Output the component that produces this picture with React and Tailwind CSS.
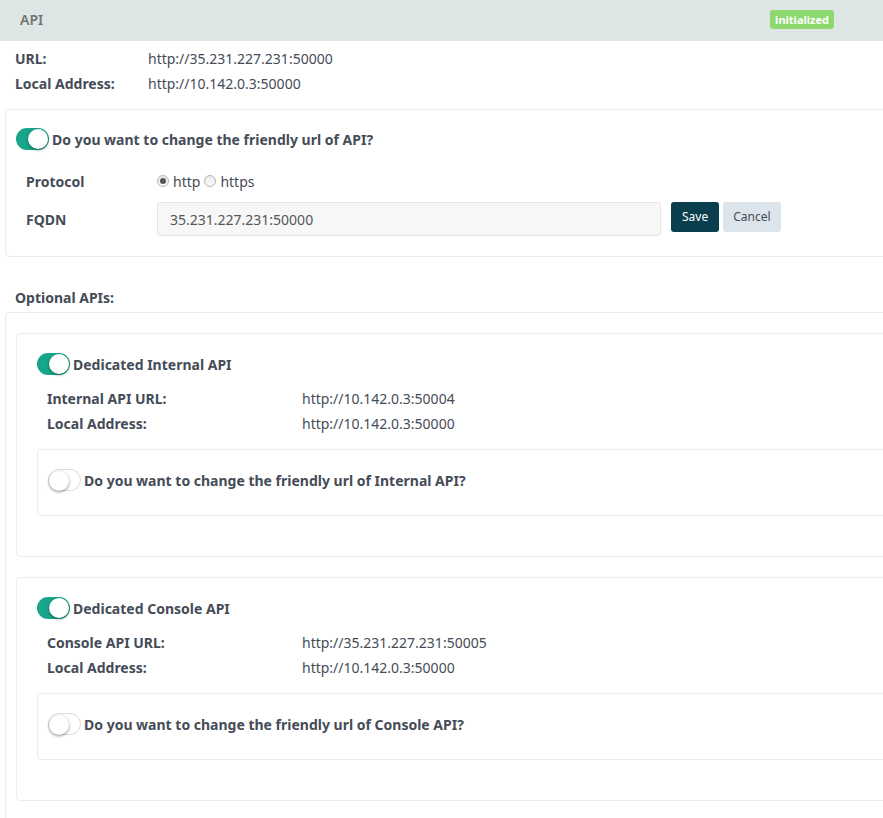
import { useState } from "react";

function Toggle({ on }) {
  return (
    <span
      className={
        "relative inline-block w-[33px] h-[22px] rounded-full shrink-0 " +
        (on ? "bg-[#17a68a]" : "bg-white border border-[#dcdcdc]")
      }
    >
      <span
        className={
          "absolute top-[1px] w-[20px] h-[20px] rounded-full bg-white shadow-[0_1px_3px_rgba(0,0,0,0.45)] " +
          (on ? "right-[1px]" : "left-0 top-0")
        }
      />
    </span>
  );
}

function Radio({ checked }) {
  return (
    <span className="inline-flex items-center justify-center w-[12px] h-[12px] rounded-full border border-[#b5b5b5] bg-gradient-to-b from-[#e9e9e9] to-[#fafafa]">
      {checked && <span className="w-[6px] h-[6px] rounded-full bg-[#555]" />}
    </span>
  );
}

function ApiCard({ title, urlLabel, url, local, friendlyName }) {
  return (
    <div className="border border-[#ececec] rounded-[4px] pt-[19px] pl-[20px] pb-[40px]">
      <div className="flex items-center gap-[3px] h-[22px]">
        <Toggle on />
        <span className="font-bold">{title}</span>
      </div>
      <div className="pl-[10px] mt-[11px]">
        <div className="flex h-[25px] items-center">
          <span className="w-[255px] font-bold">{urlLabel}</span>
          <span>{url}</span>
        </div>
        <div className="flex h-[25px] items-center">
          <span className="w-[255px] font-bold">Local Address:</span>
          <span>{local}</span>
        </div>
      </div>
      <div className="mt-[13px] border border-[#ececec] rounded-[4px] h-[67px] pl-[10px] pt-[19px]">
        <div className="flex items-center gap-[3px] h-[22px]">
          <Toggle on={false} />
          <span className="font-bold">
            Do you want to change the friendly url of {friendlyName}?
          </span>
        </div>
      </div>
    </div>
  );
}

export default function App() {
  const [fqdn, setFqdn] = useState("35.231.227.231:50000");

  return (
    <div className="w-full h-[818px] overflow-hidden bg-white font-['Noto_Sans',sans-serif] text-[14px] text-[#454c57]">
      <div className="w-[910px]">
        <div className="h-[41px] bg-[#dde6e4] flex items-center justify-between pl-[20px] pr-[76px]">
          <span className="text-[#727272] font-semibold -mt-[3px]">API</span>
          <span className="bg-[#8dd96f] text-white text-[11px] font-bold rounded-[3px] px-[5px] h-[19px] leading-[19px] -mt-[3px]">
            initialized
          </span>
        </div>

        <div className="px-[15px] pt-[5px]">
          <div className="flex h-[25px] items-center">
            <span className="w-[133px] font-bold">URL:</span>
            <span>http://35.231.227.231:50000</span>
          </div>
          <div className="flex h-[25px] items-center">
            <span className="w-[133px] font-bold">Local Address:</span>
            <span>http://10.142.0.3:50000</span>
          </div>
        </div>

        <div className="ml-[5px] mt-[13px] border border-[#ececec] rounded-[4px] h-[148px] pt-[18px] pl-[10px]">
          <div className="flex items-center gap-[3px] h-[22px]">
            <Toggle on />
            <span className="font-bold">Do you want to change the friendly url of API?</span>
          </div>
          <div className="pl-[10px] mt-[19px]">
            <div className="flex items-center h-[24px]">
              <span className="w-[131px] font-bold">Protocol</span>
              <label className="flex items-center gap-[4px]">
                <Radio checked />
                <span>http</span>
              </label>
              <label className="flex items-center gap-[4px] ml-[4px]">
                <Radio />
                <span>https</span>
              </label>
            </div>
            <div className="flex items-center mt-[9px]">
              <span className="w-[131px] font-bold">FQDN</span>
              <input
                value={fqdn}
                onChange={(e) => setFqdn(e.target.value)}
                className="w-[504px] h-[34px] bg-[#f7f7f7] border border-[#e6e6e6] rounded-[3px] px-[12px] text-[#555] outline-none"
              />
              <button className="ml-[10px] self-start h-[30px] px-[11px] rounded-[3px] bg-[#0a3e4f] text-white text-[12px]">
                Save
              </button>
              <button className="ml-[4px] self-start h-[30px] px-[10px] rounded-[3px] bg-[#dce5eb] text-[#454c57] text-[12px]">
                Cancel
              </button>
            </div>
          </div>
        </div>

        <div className="px-[15px] mt-[30px] font-bold">Optional APIs:</div>

        <div className="ml-[5px] mt-[4px] border border-[#ececec] rounded-[4px] pt-[20px] pl-[10px] pb-[40px] flex flex-col gap-[20px]">
          <ApiCard
            title="Dedicated Internal API"
            urlLabel="Internal API URL:"
            url="http://10.142.0.3:50004"
            local="http://10.142.0.3:50000"
            friendlyName="Internal API"
          />
          <ApiCard
            title="Dedicated Console API"
            urlLabel="Console API URL:"
            url="http://35.231.227.231:50005"
            local="http://10.142.0.3:50000"
            friendlyName="Console API"
          />
        </div>
      </div>
    </div>
  );
}
